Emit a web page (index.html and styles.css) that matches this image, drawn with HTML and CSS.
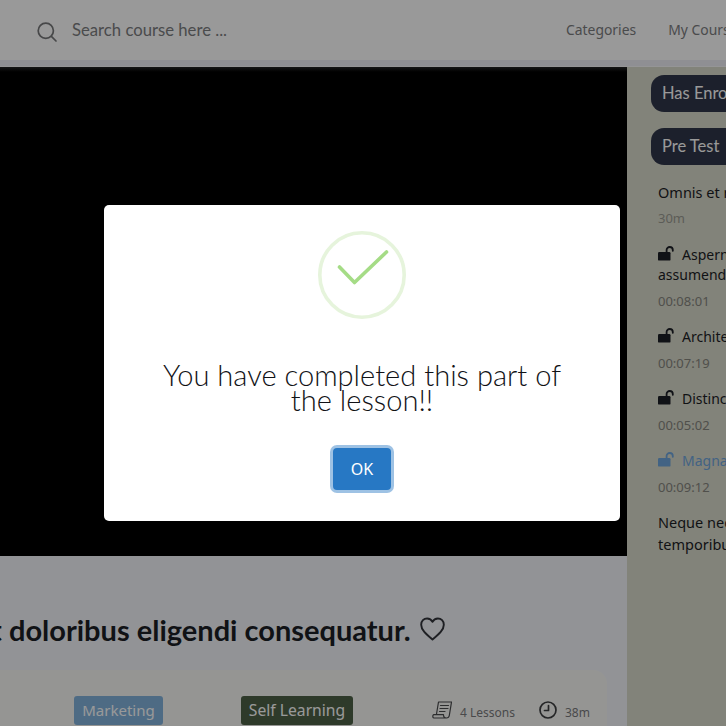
FILE: index.html
```html
<!DOCTYPE html>
<html lang="en">
<head>
    <meta charset="UTF-8">
    <meta name="viewport" content="width=device-width, initial-scale=1.0">
    <title>Lesson</title>
    <link rel="stylesheet" href="styles.css">
</head>
<body>
    <header class="topbar">
        <div class="search">
            <svg class="search-icon" viewBox="0 0 20 20" width="20" height="20" fill="none" stroke="#77787a" stroke-width="1.7" stroke-linecap="round">
                <circle cx="8.8" cy="8.8" r="7.6"/>
                <path d="M14.4 14.4L19 19"/>
            </svg>
            <span>Search course here ...</span>
        </div>
        <nav class="nav">
            <a>Categories</a>
            <a>My Courses</a>
        </nav>
    </header>
    <div class="strip"></div>

    <div class="content">
        <main class="lesson">
            <div class="video"></div>
            <h1 class="lesson-title">
                <span>Et doloribus eligendi consequatur.</span>
                <svg viewBox="0 0 26 25" width="25" height="24" fill="none" stroke="#33353b" stroke-width="2" stroke-linejoin="round">
                    <path d="M13 23.5C6 17.5 1.2 13.3 1.2 8C1.2 4.2 4 1.5 7.4 1.5C9.7 1.5 11.8 2.7 13 5C14.2 2.7 16.3 1.5 18.6 1.5C22 1.5 24.8 4.2 24.8 8C24.8 13.3 20 17.5 13 23.5Z"/>
                </svg>
            </h1>
            <div class="info-card">
                <span class="tag tag-blue">Marketing</span>
                <span class="tag tag-dark">Self Learning</span>
                <span class="meta meta-lessons">
                    <svg viewBox="0 0 20 18" width="20" height="18" fill="none" stroke="#4a4b4d" stroke-width="1.2" stroke-linejoin="round" stroke-linecap="round">
                        <path d="M4.5 13L6.5 1H19.5L17.3 14.5C17 16.3 15.8 17 14.5 17H2C0.9 17 0.6 15.8 1 14.5C1.1 14 1.5 13.7 2 13.7H11.5C11.5 15 12 17 14.5 17"/>
                        <path d="M8.5 4.5H16.5M8 7.5H16M7.5 10.5H13"/>
                    </svg>
                    <span class="meta-text">4 Lessons</span>
                </span>
                <span class="meta">
                    <svg viewBox="0 0 18 18" width="18" height="18" fill="none" stroke="#3f4042" stroke-width="1.7" stroke-linecap="round" stroke-linejoin="round">
                        <circle cx="9" cy="9" r="8"/>
                        <path d="M9.5 4.5V9.5H5.5"/>
                    </svg>
                    <span class="meta-text">38m</span>
                </span>
            </div>
        </main>

        <aside class="sidebar">
            <div class="chip">Has Enrolled</div>
            <div class="chip">Pre Test</div>

            <h3 class="section-name">Omnis et rerum</h3>
            <div class="section-time">30m</div>

            <div class="item">
                <div class="item-name"><svg class="lock"><use href="#lock"/></svg>Aspernatur nihil<br>assumenda quia</div>
                <div class="item-time">00:08:01</div>
            </div>
            <div class="item">
                <div class="item-name"><svg class="lock"><use href="#lock"/></svg>Architecto quia</div>
                <div class="item-time">00:07:19</div>
            </div>
            <div class="item">
                <div class="item-name"><svg class="lock"><use href="#lock"/></svg>Distinctio amet</div>
                <div class="item-time">00:05:02</div>
            </div>
            <div class="item item-active">
                <div class="item-name"><svg class="lock"><use href="#lock"/></svg>Magnam sit</div>
                <div class="item-time">00:09:12</div>
            </div>

            <h3 class="section-name section-last">Neque necessitatibus<br>temporibus earum</h3>
        </aside>
    </div>

    <svg class="defs" width="0" height="0">
        <symbol id="lock" viewBox="0 0 16 15">
            <rect x="0" y="6" width="12.5" height="8.6" rx="1.2" fill="currentColor"/>
            <path d="M8.6 6.5V4C8.6 2.2 10 1 11.7 1C13.4 1 14.8 2.2 14.8 4V4.8" fill="none" stroke="currentColor" stroke-width="1.8" stroke-linecap="round"/>
        </symbol>
    </svg>

    <div class="overlay">
        <div class="modal">
            <svg class="modal-icon" viewBox="0 0 88 88" width="88" height="88" fill="none" stroke-linecap="round" stroke-linejoin="round">
                <circle cx="44" cy="44" r="42.2" stroke="#e6f4dc" stroke-width="3.6"/>
                <path d="M21.5 36L36.5 51.5L68.5 21" stroke="#a5dc86" stroke-width="3.6"/>
            </svg>
            <h2 class="modal-title">You have completed this part of the lesson!!</h2>
            <button class="modal-btn">OK</button>
        </div>
    </div>
</body>
</html>
```

FILE: styles.css
```css
html, body {
    margin: 0;
    padding: 0;
    height: 100%;
    overflow: hidden;
}
body {
    font-family: "Lato", "Noto Sans", sans-serif;
    background: #f4f6fb;
    color: #1c1e26;
}
.topbar {
    display: flex;
    align-items: center;
    height: 60px;
    padding-left: 37px;
    background: #ffffff;
    white-space: nowrap;
}
.search {
    display: flex;
    align-items: center;
    gap: 15px;
    width: 529px;
    flex: none;
    font-size: 16.7px;
    color: #7c7d7f;
}
.search-icon {
    margin-top: 3px;
}
.nav {
    display: flex;
    gap: 32px;
    margin-top: -2px;
    font-family: "Noto Sans", sans-serif;
    font-size: 13.9px;
    color: #7c7d7f;
}
.strip {
    height: 6px;
    background: #eeeff5;
    border-bottom: 1px solid #f8f8fa;
}
.content {
    display: flex;
}
.lesson {
    width: 627px;
    flex: none;
    overflow: hidden;
}
.video {
    height: 489px;
    background: linear-gradient(#262626, #000 5px);
}
.lesson-title {
    display: flex;
    align-items: center;
    gap: 9px;
    margin: 58px 0 0 -25px;
    height: 30px;
    font-size: 29px;
    font-weight: 700;
    white-space: nowrap;
    color: #1c1e26;
}
.info-card {
    display: flex;
    align-items: flex-start;
    width: 607px;
    height: 80px;
    margin-top: 26px;
    padding-top: 26px;
    box-sizing: border-box;
    border-radius: 0 14px 0 0;
    background: #f9f9f6;
    font-family: "Noto Sans", sans-serif;
}
.tag {
    height: 29px;
    line-height: 28px;
    border-radius: 3px;
    font-size: 15px;
    text-align: center;
}
.tag-blue {
    width: 89px;
    margin-left: 74px;
    background: #83b3dd;
    color: #fff;
}
.tag-dark {
    width: 112px;
    margin-left: 78px;
    background: #4d6146;
    color: #fff;
    font-size: 15.7px;
}
.meta {
    display: flex;
    align-items: center;
    gap: 8px;
    height: 27px;
    font-size: 12px;
    color: #7a7b7d;
}
.meta-text {
    margin-top: 6px;
}
.meta-lessons {
    margin-left: 79px;
    margin-right: 24px;
}
.sidebar {
    flex: 1;
    height: 660px;
    padding: 8px 0 0 24px;
    background: #d9dacb;
    white-space: nowrap;
    overflow: hidden;
    font-family: "Noto Sans", sans-serif;
    font-size: 14px;
}
.chip {
    width: 120px;
    height: 37px;
    line-height: 37px;
    margin-bottom: 16px;
    padding-left: 11px;
    border-radius: 13px;
    background: #30364a;
    color: #fff;
    font-family: "Lato", sans-serif;
    font-size: 16.5px;
}
.section-name {
    margin: 0 0 0 7px;
    font-size: 14.5px;
    font-weight: 400;
    line-height: 22px;
}
.section-time {
    margin: 5px 0 0 7px;
    font-size: 13px;
    line-height: 20px;
    color: #9a9a92;
}
.item {
    margin: 17px 0 0 7px;
}
.item + .item {
    margin-top: 16px;
}
.item-name {
    font-size: 14px;
    line-height: 20px;
}
.lock {
    width: 16px;
    height: 15px;
    margin-right: 8px;
    vertical-align: -1px;
}
.item-time {
    margin-top: 6px;
    font-size: 13px;
    line-height: 20px;
    color: #85857e;
}
.item-active .item-name {
    color: #6fa5dc;
}
.section-last {
    margin-top: 14px;
}
.defs {
    position: absolute;
}
.overlay {
    position: fixed;
    inset: 0;
    display: flex;
    align-items: center;
    justify-content: center;
    padding-right: 2px;
    background: rgba(0, 0, 0, 0.4);
}
.modal {
    display: flex;
    flex-direction: column;
    align-items: center;
    width: 516px;
    height: 316px;
    box-sizing: border-box;
    padding-top: 26px;
    border-radius: 5px;
    background: #fff;
}
.modal-title {
    margin: 43px 50px 0;
    font-size: 29.1px;
    font-weight: 300;
    line-height: 25px;
    text-align: center;
    color: #111216;
}
.modal-btn {
    width: 58px;
    height: 42px;
    margin-top: 36px;
    padding: 0;
    border: none;
    border-radius: 4px;
    background: #2778c4;
    box-shadow: 0 0 0 3px rgba(39, 120, 196, 0.45);
    color: #fff;
    font-family: "Noto Sans", sans-serif;
    font-size: 16px;
}
```
